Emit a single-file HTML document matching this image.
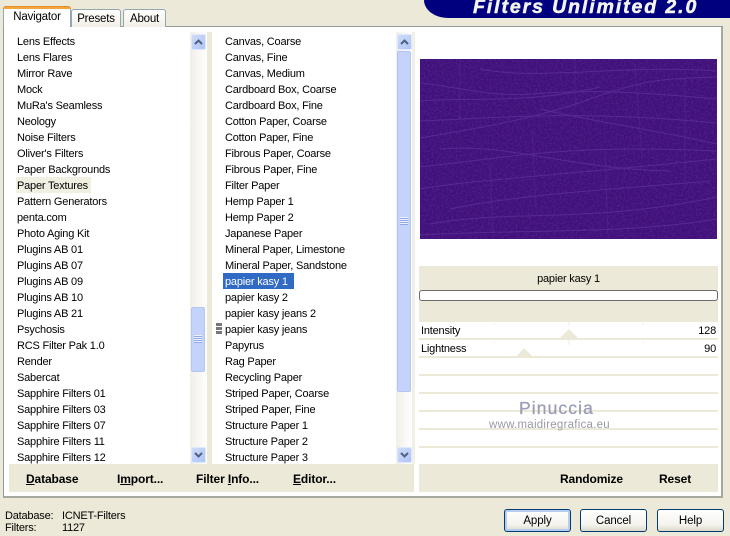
<!DOCTYPE html>
<html><head><meta charset="utf-8"><style>
html,body{margin:0;padding:0}
body{width:730px;height:534px;background:#ece9d8;position:relative;overflow:hidden;font-family:"Liberation Sans",sans-serif;font-size:11px;letter-spacing:-.2px;color:#000}
div{position:absolute;box-sizing:border-box}
.t{white-space:nowrap;line-height:16px;height:16px}
.b{font-weight:bold;font-size:12px;letter-spacing:-.12px;white-space:nowrap;line-height:16px}
.tab{background:linear-gradient(#fff,#f1efe6);border:1px solid #91a7b4;border-bottom:none;border-radius:3px 3px 0 0;text-align:center}
.sb{background:linear-gradient(90deg,#f1efe7,#fefefe)}
.btn{background:linear-gradient(#fff,#f4f3ee 70%,#dcd8c9);border:1px solid #003c74;border-radius:3px;text-align:center;font-size:11.5px;letter-spacing:-.1px;line-height:23px}
.ar{background:linear-gradient(135deg,#cfdcfa,#aec5f5);border:1px solid #dfe8fc;border-radius:2px}
.ln{left:419px;width:299px;height:2px;background:#ece9d8}
</style></head><body>
<div style="left:424px;top:0;width:306px;height:18px;background:#00007f;border-bottom-left-radius:24px 18px"></div>
<div style="left:473px;top:-4px;font:italic bold 19.5px 'Liberation Sans',sans-serif;color:#f4f4ee;letter-spacing:1.9px;-webkit-text-stroke:.5px #f4f4ee;white-space:nowrap;line-height:22px">Filters Unlimited 2.0</div>

<div style="left:3px;top:26px;width:720px;height:472px;background:#fff;border:1px solid #919b9c;border-right:2px solid #a5a99f;border-bottom:2px solid #a5a99f"></div>
<div class="tab" style="left:71px;top:9px;width:50px;height:18px;line-height:18px;font-size:11.5px">Presets</div>
<div class="tab" style="left:123px;top:9px;width:43px;height:18px;line-height:18px;font-size:11.5px">About</div>
<div style="left:3px;top:6px;width:68px;height:21px;background:#fff;border:1px solid #91a7b4;border-top:none;border-bottom:none;border-radius:3px 3px 0 0;text-align:center;line-height:19px;font-size:11.5px;padding-top:2px">Navigator</div>
<div style="left:3px;top:6px;width:68px;height:3px;background:#f2a63b;border-radius:3px 3px 0 0;border-top:1px solid #e68b2c"></div>

<div style="left:207px;top:32px;width:5px;height:432px;background:#ece9d8"></div>
<div style="left:412px;top:32px;width:3px;height:432px;background:#f1efe6"></div>

<div class="sb" style="left:190px;top:32px;width:17px;height:432px"></div>
<div class="ar" style="left:191px;top:34px;width:15px;height:16px"></div>
<svg style="position:absolute;left:191px;top:34px" width="15" height="16"><path d="M4 10 L7.5 6.5 L11 10" fill="none" stroke="#4d6185" stroke-width="2"/></svg>
<div class="ar" style="left:191px;top:447px;width:15px;height:16px"></div>
<svg style="position:absolute;left:191px;top:447px" width="15" height="16"><path d="M4 6 L7.5 9.5 L11 6" fill="none" stroke="#4d6185" stroke-width="2"/></svg>
<div style="left:191px;top:307px;width:14px;height:65px;background:#c3d3fb;border:1px solid #b4c6f0;border-radius:2px"></div>
<div style="left:194px;top:335px;width:8px;height:8px;background:repeating-linear-gradient(#eef2fe 0 1px,#8ea8e8 1px 2px)"></div>

<div class="sb" style="left:396px;top:32px;width:16px;height:432px"></div>
<div class="ar" style="left:397px;top:34px;width:15px;height:16px"></div>
<svg style="position:absolute;left:397px;top:34px" width="15" height="16"><path d="M4 10 L7.5 6.5 L11 10" fill="none" stroke="#4d6185" stroke-width="2"/></svg>
<div class="ar" style="left:397px;top:447px;width:15px;height:16px"></div>
<svg style="position:absolute;left:397px;top:447px" width="15" height="16"><path d="M4 6 L7.5 9.5 L11 6" fill="none" stroke="#4d6185" stroke-width="2"/></svg>
<div style="left:397px;top:51px;width:14px;height:341px;background:#c3d3fb;border:1px solid #b4c6f0;border-radius:2px"></div>
<div style="left:400px;top:217px;width:8px;height:8px;background:repeating-linear-gradient(#eef2fe 0 1px,#8ea8e8 1px 2px)"></div>

<div style="left:16px;top:177px;width:75px;height:16px;background:#f1efe2"></div>
<div style="left:17px;top:33px">
<div class="t" style="position:static;margin-top:1px">Lens Effects</div><div class="t" style="position:static">Lens Flares</div><div class="t" style="position:static">Mirror Rave</div><div class="t" style="position:static">Mock</div><div class="t" style="position:static">MuRa's Seamless</div><div class="t" style="position:static">Neology</div><div class="t" style="position:static">Noise Filters</div><div class="t" style="position:static">Oliver's Filters</div><div class="t" style="position:static">Paper Backgrounds</div><div class="t" style="position:static">Paper Textures</div><div class="t" style="position:static">Pattern Generators</div><div class="t" style="position:static">penta.com</div><div class="t" style="position:static">Photo Aging Kit</div><div class="t" style="position:static">Plugins AB 01</div><div class="t" style="position:static">Plugins AB 07</div><div class="t" style="position:static">Plugins AB 09</div><div class="t" style="position:static">Plugins AB 10</div><div class="t" style="position:static">Plugins AB 21</div><div class="t" style="position:static">Psychosis</div><div class="t" style="position:static">RCS Filter Pak 1.0</div><div class="t" style="position:static">Render</div><div class="t" style="position:static">Sabercat</div><div class="t" style="position:static">Sapphire Filters 01</div><div class="t" style="position:static">Sapphire Filters 03</div><div class="t" style="position:static">Sapphire Filters 07</div><div class="t" style="position:static">Sapphire Filters 11</div><div class="t" style="position:static">Sapphire Filters 12</div>
</div>

<div style="left:223px;top:273px;width:71px;height:16px;background:#316ac5"></div>
<div style="left:216px;top:323px;width:6px;height:11px;background:repeating-linear-gradient(#777 0 3px,#fff 3px 4px)"></div>
<div style="left:225px;top:33px">
<div class="t" style="position:static;margin-top:1px">Canvas, Coarse</div><div class="t" style="position:static">Canvas, Fine</div><div class="t" style="position:static">Canvas, Medium</div><div class="t" style="position:static">Cardboard Box, Coarse</div><div class="t" style="position:static">Cardboard Box, Fine</div><div class="t" style="position:static">Cotton Paper, Coarse</div><div class="t" style="position:static">Cotton Paper, Fine</div><div class="t" style="position:static">Fibrous Paper, Coarse</div><div class="t" style="position:static">Fibrous Paper, Fine</div><div class="t" style="position:static">Filter Paper</div><div class="t" style="position:static">Hemp Paper 1</div><div class="t" style="position:static">Hemp Paper 2</div><div class="t" style="position:static">Japanese Paper</div><div class="t" style="position:static">Mineral Paper, Limestone</div><div class="t" style="position:static">Mineral Paper, Sandstone</div><div class="t" style="position:static;color:#fff">papier kasy 1</div><div class="t" style="position:static">papier kasy 2</div><div class="t" style="position:static">papier kasy jeans 2</div><div class="t" style="position:static">papier kasy jeans</div><div class="t" style="position:static">Papyrus</div><div class="t" style="position:static">Rag Paper</div><div class="t" style="position:static">Recycling Paper</div><div class="t" style="position:static">Striped Paper, Coarse</div><div class="t" style="position:static">Striped Paper, Fine</div><div class="t" style="position:static">Structure Paper 1</div><div class="t" style="position:static">Structure Paper 2</div><div class="t" style="position:static">Structure Paper 3</div>
</div>

<svg style="position:absolute;left:420px;top:59px" width="297" height="180" viewBox="0 0 297 180">
<filter id="n" x="0" y="0" width="100%" height="100%"><feTurbulence type="fractalNoise" baseFrequency="0.5" numOctaves="2" seed="4"/><feColorMatrix values="0 0 0 0 0.5 0 0 0 0 0.28 0 0 0 0 0.66 0.9 0 0 0 -0.3"/></filter>
<rect width="297" height="180" fill="#3f0f7a"/>
<rect width="297" height="180" filter="url(#n)" opacity=".3"/>
<g fill="none" stroke="#5c2f98" stroke-width="1" opacity=".8">
<path d="M0 24 C40 28 70 38 110 35 S190 30 297 40"/><path d="M0 79 C40 72 110 62 170 40 S250 20 297 18"/><path d="M0 42 C50 38 110 45 180 28"/>
<path d="M0 130 C60 120 120 118 297 100"/><path d="M0 62 C60 60 150 50 297 64"/><path d="M10 165 C90 150 170 165 297 138"/>
<path d="M0 108 C90 98 150 85 297 92"/><path d="M60 10 C120 22 200 5 297 12"/><path d="M30 150 C100 135 200 130 290 122"/><path d="M0 176 C100 170 200 176 297 160"/>
<path d="M120 50 C170 62 230 70 297 85"/><path d="M20 90 C90 84 150 110 250 112"/>
</g>
<path d="M40 0 V60 M155 0 V50 M215 5 L222 100 M112 70 L116 150 M265 20 V130 M70 100 L73 175 M185 90 L188 178" fill="none" stroke="#5a2c96" stroke-width="1" opacity=".45"/>
</svg>

<div style="left:419px;top:266px;width:299px;height:56px;background:#ece9d8"></div>
<div style="left:419px;top:271px;width:299px;text-align:center;line-height:16px">papier kasy 1</div>
<div style="left:419px;top:290px;width:299px;height:11px;background:#fff;border:1px solid #6b6b6b;border-radius:3px"></div>
<div class="ln" style="top:338px"></div><div class="ln" style="top:356px"></div><div class="ln" style="top:374px"></div><div class="ln" style="top:392px"></div><div class="ln" style="top:410px"></div><div class="ln" style="top:428px"></div><div class="ln" style="top:446px"></div>
<svg style="position:absolute;left:419px;top:322px" width="300" height="36"><path d="M141 16 L150 7 L159 16Z M97 35 L105 26 L114 35Z" fill="#ece9d8"/><path d="M150 0V4 M150 18V23 M75 1V3 M224 1V3 M75 19V21 M224 19V21" stroke="#efede3"/></svg>
<div class="t" style="left:421px;top:323px">Intensity</div>
<div class="t" style="left:421px;top:341px">Lightness</div>
<div class="t" style="right:14px;top:323px">128</div>
<div class="t" style="right:14px;top:341px">90</div>
<div style="left:519px;top:398px;font-size:17.5px;line-height:20px;color:#9a9cb8;letter-spacing:1.1px;-webkit-text-stroke:.3px #9a9cb8;white-space:nowrap">Pinuccia</div>
<div style="left:489px;top:418px;font-size:11.5px;line-height:14px;color:#9a9aa8;letter-spacing:.25px;white-space:nowrap">www.maidiregrafica.eu</div>

<div style="left:9px;top:464px;width:405px;height:28px;background:#ece9d8"></div>
<div style="left:419px;top:464px;width:299px;height:28px;background:#ece9d8"></div>
<div class="b" style="left:26px;top:471px"><u>D</u>atabase</div>
<div class="b" style="left:117px;top:471px">I<u>m</u>port...</div>
<div class="b" style="left:196px;top:471px">Filter <u>I</u>nfo...</div>
<div class="b" style="left:293px;top:471px"><u>E</u>ditor...</div>
<div class="b" style="left:560px;top:471px">Randomize</div>
<div class="b" style="left:659px;top:471px">Reset</div>

<div class="t" style="left:5px;top:508px">Database:</div><div class="t" style="left:62px;top:508px">ICNET-Filters</div>
<div class="t" style="left:5px;top:520px">Filters:</div><div class="t" style="left:62px;top:520px">1127</div>
<div class="btn" style="left:504px;top:509px;width:67px;height:23px;box-shadow:inset 0 0 0 2px #b5cdf0">Apply</div>
<div class="btn" style="left:580px;top:509px;width:67px;height:23px">Cancel</div>
<div class="btn" style="left:657px;top:509px;width:67px;height:23px">Help</div>
</body></html>
